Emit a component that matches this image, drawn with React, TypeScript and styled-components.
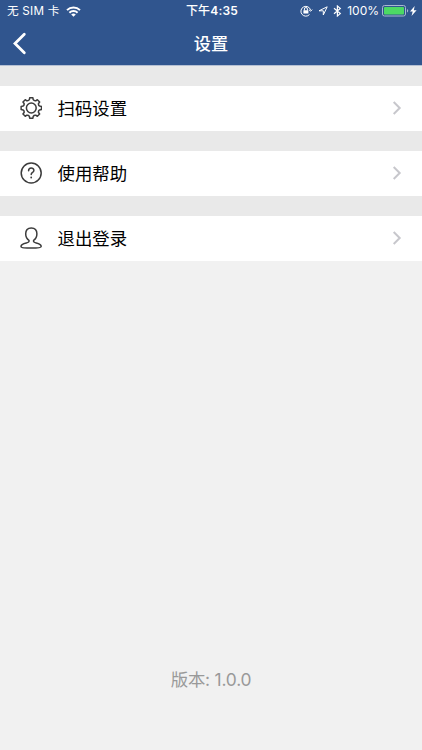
import * as React from "react";
import styled, { createGlobalStyle } from "styled-components";

const GlobalStyle = createGlobalStyle`
  * {
    box-sizing: border-box;
  }
  body {
    margin: 0;
    background: #f1f1f1;
    font-family: Inter, "Noto Sans CJK SC", sans-serif;
  }
`;

const Screen = styled.div`
  display: flex;
  flex-direction: column;
  width: 100%;
  height: 750px;
  overflow: hidden;
  background: #f1f1f1;
`;

const Header = styled.header`
  height: 66px;
  flex-shrink: 0;
  color: #fff;
  background: #30558e;
  border-bottom: 1px solid #b5c0d3;
`;

const StatusBar = styled.div`
  display: grid;
  grid-template-columns: 1fr auto 1fr;
  align-items: center;
  height: 22px;
  padding: 0 5px 0 7px;
  font-size: 12px;
  line-height: 22px;
  white-space: nowrap;
`;

const Carrier = styled.div`
  display: flex;
  align-items: center;
  gap: 6px;
  font-size: 11.7px;
  letter-spacing: 0.2px;
`;

const Time = styled.div`
  font-weight: 600;
  letter-spacing: 0.2px;
`;

const Meridiem = styled.span`
  font-weight: 500;
`;

const Indicators = styled.div`
  display: flex;
  align-items: center;
  justify-content: flex-end;
`;

const StatusIcons = styled.div`
  display: flex;
  align-items: center;
  gap: 5px;
`;

const Battery = styled.span`
  margin: 0 3px 0 5px;
`;

const NavBar = styled.nav`
  display: grid;
  grid-template-columns: 40px 1fr 40px;
  align-items: center;
  height: 43px;
`;

const BackButton = styled.button`
  display: flex;
  padding: 0 0 0 12px;
  border: 0;
  color: inherit;
  background: none;
`;

const Title = styled.h1`
  margin: 0;
  font-size: 17.2px;
  font-weight: 500;
  line-height: 24px;
  text-align: center;
`;

const Menu = styled.ul`
  display: flex;
  flex-direction: column;
  gap: 20px;
  margin: 0;
  padding: 20px 0 0;
  list-style: none;
  background: #e9e9e9;
`;

const Row = styled.li`
  display: flex;
  align-items: center;
  height: 45px;
  padding: 0 20px;
  background: #fff;
`;

const RowIcon = styled.svg`
  width: 22px;
  height: 22px;
  margin: 0 15.5px 2px 0;
  fill: none;
  stroke: #3c3c3c;
  stroke-width: 1.5;
  stroke-linejoin: round;
  stroke-linecap: round;
`;

const Label = styled.span`
  flex: 1;
  font-size: 17.4px;
  line-height: 24px;
  color: #000;
`;

const Version = styled.footer`
  margin-top: auto;
  padding-bottom: 58px;
  font-size: 17.4px;
  line-height: 24px;
  letter-spacing: -0.2px;
  text-align: center;
  color: #999;
`;

const polar = (r: number, deg: number) => {
  const a = (deg * Math.PI) / 180;
  return `${(11.3 + r * Math.sin(a)).toFixed(2)} ${(11 - r * Math.cos(a)).toFixed(2)}`;
};

const gearPath =
  Array.from({ length: 8 }, (_, i) => {
    const a = i * 45;
    return `${i ? "L" : "M"}${polar(8.5, a - 13)}L${polar(10.3, a - 9)}L${polar(10.3, a + 9)}L${polar(8.5, a + 13)}Q${polar(7.4, a + 22.5)} ${polar(8.5, a + 32)}`;
  }).join("") + "Z";

const WifiIcon = () => (
  <svg width="15" height="11" viewBox="0 0 15 11" fill="none" stroke="#fff" strokeWidth="2">
    <path d="M1 4.1a9.3 9.3 0 0 1 13 0M3.4 6.7a5.8 5.8 0 0 1 8.2 0" />
    <path d="M5.200 8.500a3.300 3.300 0 0 1 4.600 0L7.500 10.800Z" fill="#fff" stroke="none" />
  </svg>
);

const LockIcon = () => (
  <svg width="13" height="12" viewBox="0 0 13 12" fill="none" stroke="#fff" strokeWidth="1">
    <path d="M9.500 9.500A4.900 4.900 0 1 1 10.600 5.200M8.900 4.800l1.800 1.400 1.500-1.600" />
    <path d="M4.400 5.500V4a1.500 1.500 0 0 1 3 0v1.500" />
    <rect x="3.400" y="5.200" width="5" height="3.400" rx=".4" fill="#fff" stroke="none" />
  </svg>
);

const LocationIcon = () => (
  <svg width="10" height="10" viewBox="0 0 10 10" fill="none" stroke="#fff" strokeLinejoin="round">
    <path d="M9.200.8 5.300 9V4.800H1Z" />
  </svg>
);

const BluetoothIcon = () => (
  <svg width="9" height="12" viewBox="0 0 9 12" fill="none" stroke="#fff" strokeWidth="1.2">
    <path d="M1 3.300 7.300 8.600 4.400 11V1l2.900 2.400L1 8.700" />
  </svg>
);

const BatteryIcon = () => (
  <svg width="27" height="12" viewBox="0 0 27 12">
    <rect x=".5" y=".5" width="23" height="10.500" rx="2" fill="none" stroke="#a9b8d0" />
    <rect x="2" y="2" width="20" height="7.500" rx=".8" fill="#4cd964" />
    <path d="M25 4v3.500q1.200-.5 1.200-1.750T25 4" fill="#a9b8d0" />
  </svg>
);

const BoltIcon = () => (
  <svg width="8" height="10" viewBox="0 0 8 10" fill="#fff">
    <path d="M5.700 0 1 5.500h2.700L2.500 10 7.600 4.200H4.800Z" />
  </svg>
);

const Chevron = () => (
  <svg width="10" height="17" viewBox="0 0 10 17" fill="none" stroke="#c7c7cc" strokeWidth="2">
    <path d="m1.700 2 6 6-6 6" />
  </svg>
);

const items = [
  {
    label: "扫码设置",
    icon: (
      <>
        <path d={gearPath} />
        <circle cx="11.300" cy="11" r="4.900" />
      </>
    ),
  },
  {
    label: "使用帮助",
    icon: (
      <>
        <circle cx="11.200" cy="11" r="10" />
        <path d="M8.600 8.700c0-3.700 5.300-3.500 5.300-.3 0 2.100-2.700 2-2.700 4.200" />
        <path d="M11.200 15.400v.1" strokeWidth="1.800" />
      </>
    ),
  },
  {
    label: "退出登录",
    icon: (
      <path d="M9 13.300C6.800 12 5.700 9.500 5.700 6.800c0-3.600 2.300-5.900 5.600-5.900s5.600 2.300 5.600 5.900c0 2.700-1.100 5.200-3.300 6.500-.4 1.600.5 2.200 2.600 2.700 3 .7 5 1.600 5 3.400 0 1.200-4.500 1.700-10 1.700S1 20.600 1 19.400c0-1.800 2.300-2.700 5.300-3.400 2.100-.5 3.100-1.100 2.700-2.700Z" />
    ),
  },
];

const App: React.FC = () => {
  return (
    <>
      <GlobalStyle />
      <Screen>
        <Header>
          <StatusBar>
            <Carrier>
              无 SIM 卡
              <WifiIcon />
            </Carrier>
            <Time>
              <Meridiem>下午</Meridiem>4:35
            </Time>
            <Indicators>
              <StatusIcons>
                <LockIcon />
                <LocationIcon />
                <BluetoothIcon />
              </StatusIcons>
              <Battery>100%</Battery>
              <BatteryIcon />
              <BoltIcon />
            </Indicators>
          </StatusBar>
          <NavBar>
            <BackButton aria-label="返回">
              <svg width="15" height="23" viewBox="0 0 15 23" fill="none" stroke="#fff" strokeWidth="2.800">
                <path d="M12.300 2.300 3 11.500l9.300 9.200" strokeLinecap="round" />
              </svg>
            </BackButton>
            <Title>设置</Title>
          </NavBar>
        </Header>
        <Menu>
          {items.map((item) => (
            <Row key={item.label}>
              <RowIcon viewBox="0 0 22 22">{item.icon}</RowIcon>
              <Label>{item.label}</Label>
              <Chevron />
            </Row>
          ))}
        </Menu>
        <Version>版本: 1.0.0</Version>
      </Screen>
    </>
  );
};

export default App;
